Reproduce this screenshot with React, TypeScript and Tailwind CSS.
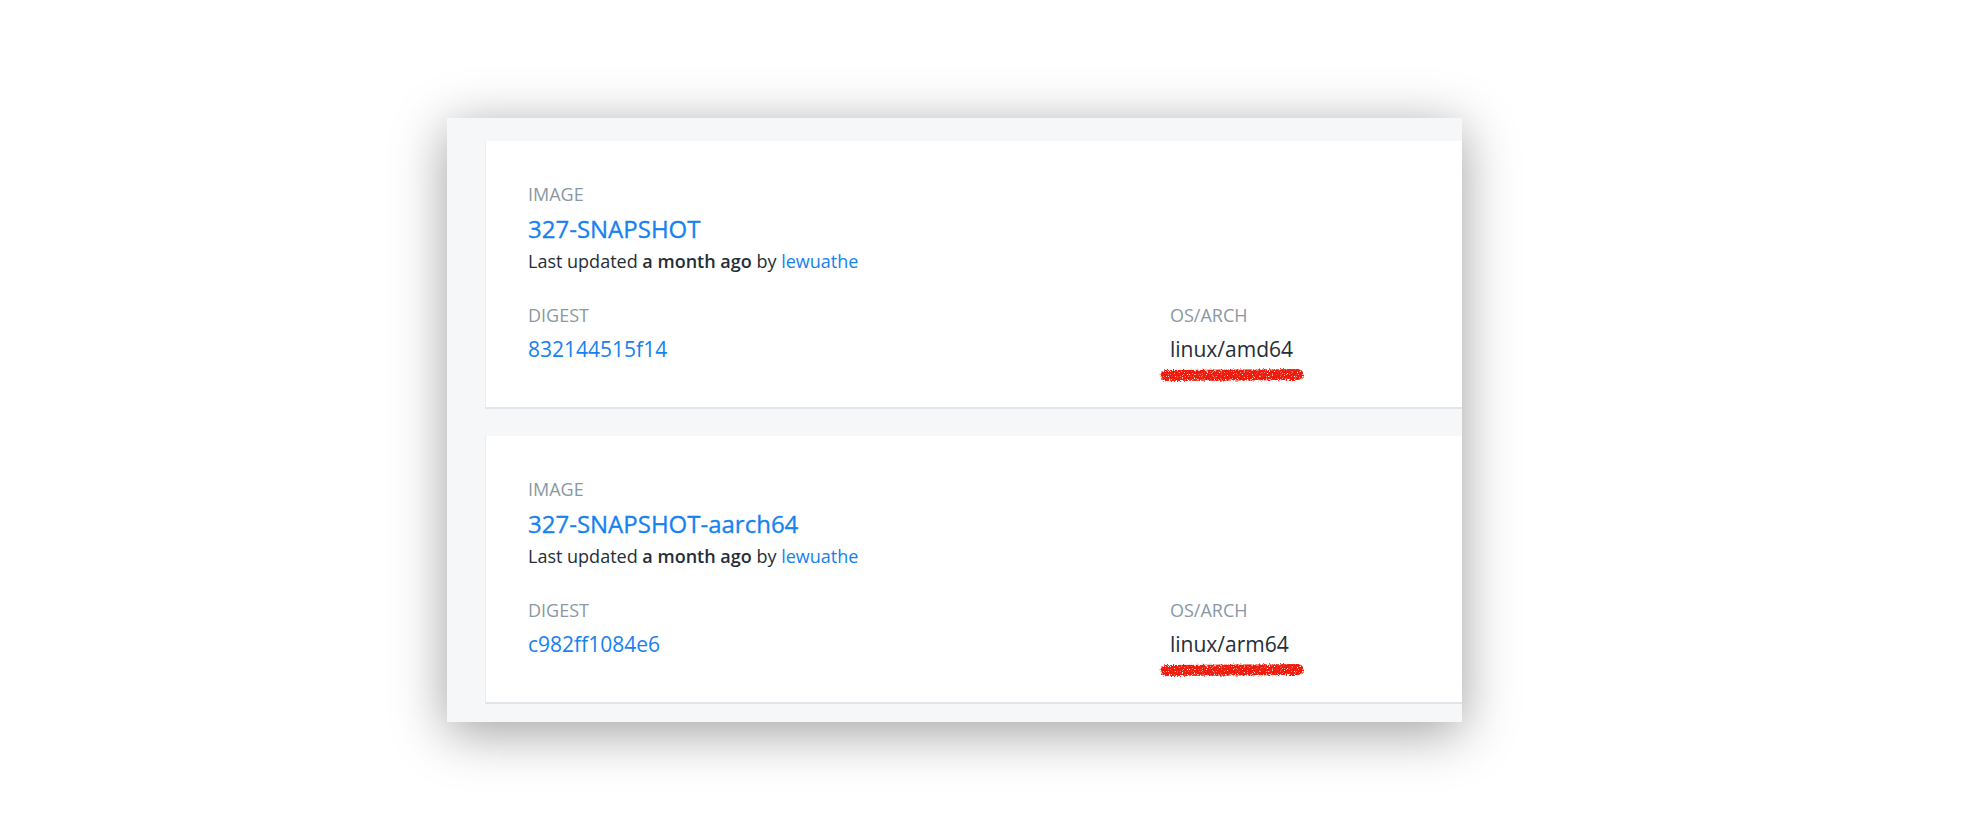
import React from "react";

interface ImageTag {
  name: string;
  updated: string;
  user: string;
  digest: string;
  osArch: string;
}

const tags: ImageTag[] = [
  { name: "327-SNAPSHOT", updated: "a month ago", user: "lewuathe", digest: "832144515f14", osArch: "linux/amd64" },
  { name: "327-SNAPSHOT-aarch64", updated: "a month ago", user: "lewuathe", digest: "c982ff1084e6", osArch: "linux/arm64" },
];

// hand-drawn red marker line laid over the screenshot
function MarkerLine({ id }: { id: string }) {
  return (
    <svg className="absolute left-[-11px] top-[29px] w-[146px] h-[18px]" viewBox="0 0 146 18">
      <defs>
        <filter id={id} filterUnits="userSpaceOnUse" x="0" y="0" width="146" height="18">
          <feTurbulence type="fractalNoise" baseFrequency="0.7" numOctaves="2" seed="3" result="noise" />
          <feDisplacementMap in="SourceGraphic" in2="noise" scale="4" xChannelSelector="R" yChannelSelector="G" result="disp" />
          <feTurbulence type="fractalNoise" baseFrequency="1.4" numOctaves="1" seed="9" result="spk" />
          <feColorMatrix in="spk" type="matrix" values="0 0 0 0 0  0 0 0 0 0  0 0 0 0 0  0 0 0 -7 5.2" result="mask" />
          <feComposite in="disp" in2="mask" operator="in" />
        </filter>
      </defs>
      <path d="M7 9.5 L139 8.5" stroke="#ef1f0c" strokeWidth="11" strokeLinecap="round" filter={`url(#${id})`} />
    </svg>
  );
}

function TagCard({ tag, idx }: { tag: ImageTag; idx: number }) {
  return (
    <div className="h-[268px] bg-white border-l border-[#eaedf0] border-b-2 border-b-[#e1e5e9] pt-[43px] pl-[42px]">
      <div className="text-[18px] leading-[20px] text-[#8a98a3]">IMAGE</div>
      <div className="mt-[11px] text-[24px] leading-[28px] text-[#1681f0] [-webkit-text-stroke:0.3px_#1681f0]">{tag.name}</div>
      <div className="mt-[8px] text-[18px] leading-[20px] text-[#242e38]">
        Last updated <span className="font-semibold">{tag.updated}</span> by{" "}
        <span className="text-[#1681f0]">{tag.user}</span>
      </div>
      <div className="mt-[34px] flex">
        <div className="w-[642px]">
          <div className="text-[18px] leading-[20px] text-[#8a98a3]">DIGEST</div>
          <div className="mt-[12px] text-[21px] leading-[24px] text-[#1681f0]">{tag.digest}</div>
        </div>
        <div>
          <div className="text-[18px] leading-[20px] text-[#8a98a3]">OS/ARCH</div>
          <div className="mt-[12px] text-[21px] leading-[24px] text-[#242e38] relative">
            {tag.osArch}
            <MarkerLine id={`rough-${idx}`} />
          </div>
        </div>
      </div>
    </div>
  );
}

export default function App() {
  return (
    <div className="min-h-screen bg-white pt-[118px] pl-[447px] font-['Open_Sans',sans-serif]">
      <div className="w-[1015px] bg-[#f6f7f9] pt-[23px] pb-[18px] pl-[38px] flex flex-col gap-[27px] shadow-[0_10px_50px_rgba(0,0,0,0.38)]">
        {tags.map((t, i) => (
          <TagCard key={t.name} tag={t} idx={i} />
        ))}
      </div>
    </div>
  );
}
